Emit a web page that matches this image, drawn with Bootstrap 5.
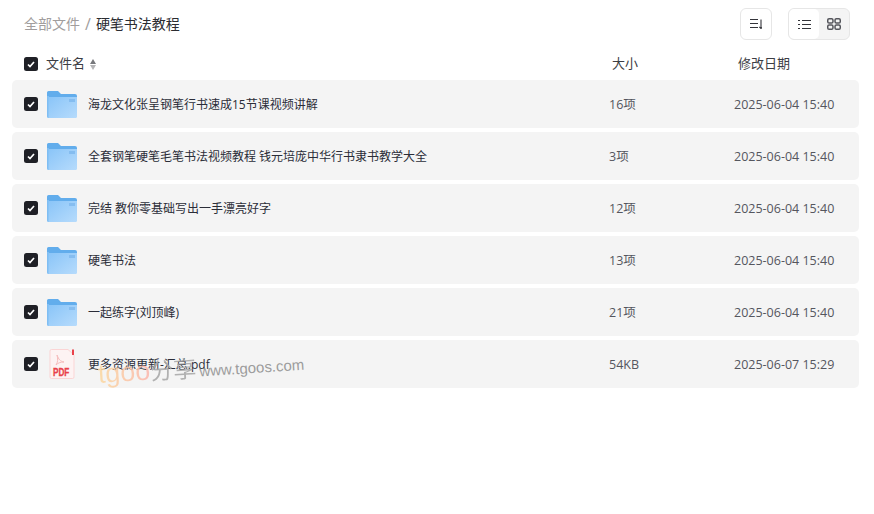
<!DOCTYPE html>
<html lang="zh-CN">
<head>
  <meta charset="UTF-8">
  <meta name="viewport" content="width=device-width, initial-scale=1.0">
  <title>硬笔书法教程</title>
  <link href="https://cdn.jsdelivr.net/npm/bootstrap@5.3.1/dist/css/bootstrap.min.css" rel="stylesheet">
  <style>
    body {
      font-family: "Open Sans", "Noto Sans CJK SC", sans-serif;
      background: #fff;
      color: #25262b;
    }
    .page-wrap { position: relative; padding: 8px 15px 0 12px; }
    .top-bar { height: 32px; padding: 0 9px 0 12px; }
    .crumb-text { display: flex; align-items: center; padding-bottom: 2px; }
    .crumb-link { font-size: 14px; color: #a19d9d; }
    .crumb-sep { font-size: 16px; color: #a19d9d; margin: 2px 5px 0 5px; line-height: 1; }
    .crumb-now { font-size: 14px; color: #2b2c31; }
    .tool-btn {
      width: 32px; height: 32px; border: 1px solid #e6e6e6; border-radius: 6px; background: #fff;
    }
    .view-group {
      width: 62px; height: 32px; border: 1px solid #e6e6e6; border-radius: 6px; background: #f4f4f4; overflow: hidden; margin-left: 16px;
    }
    .view-item { width: 30px; height: 30px; }
    .view-item.on { background: #fff; border-radius: 5px; }
    .head-row { height: 40px; padding: 8px 0 0 12px; font-size: 13px; color: #3c3d44; }
    .tick {
      width: 14px; height: 14px; border-radius: 2.5px; background: #1f2026; flex: none;
    }
    .col-name { flex: 1; min-width: 0; }
    .sort-caret { margin-left: 5px; }
    .head-size { width: 126px; }
    .head-date { width: 121px; }
    .file-row {
      height: 48px; margin-bottom: 4px; padding-left: 12px; background: #f4f4f4; border-radius: 5px; font-size: 12px;
    }
    .file-row .col-name, .cell-size, .cell-date { padding-top: 2px; }
    .file-ico { width: 38px; margin-left: 5px; flex: none; }
    .file-name { margin-left: 7px; color: #2b2d38; }
    .cell-size { width: 125px; color: #55565e; font-size: 12.5px; }
    .cell-date { width: 125px; color: #55565e; font-size: 12.5px; }
    .stamp {
      position: absolute; left: 99px; top: 358px; white-space: nowrap; transform: rotate(-3.7deg); transform-origin: left bottom; pointer-events: none; font-family: "Liberation Sans", "Noto Sans CJK SC", sans-serif;
    }
    .stamp-logo {
      font-size: 27px; line-height: 1; background: linear-gradient(90deg, #fbd9a0, #fcc1a8 70%, #fcb5ad); -webkit-background-clip: text; background-clip: text; color: transparent; opacity: .85;
    }
    .stamp-cn { font-size: 23px; color: #a6a6a6; opacity: .85; }
    .stamp-url { font-size: 15px; color: #9c9c9c; margin-left: 3px; }
  </style>
</head>
<body>
  <div class="page-wrap">
    <!-- 顶部 -->
    <div class="top-bar d-flex align-items-center">
      <div class="crumb-text">
        <span class="crumb-link">全部文件</span>
        <span class="crumb-sep">/</span>
        <span class="crumb-now">硬笔书法教程</span>
      </div>
      <div class="ms-auto d-flex">
        <div class="tool-btn d-flex align-items-center justify-content-center">
          <svg width="12" height="10" viewBox="0 0 12 10" fill="none" stroke="#33343a" stroke-width="1.100"><path d="M0 .5h8M0 4.500h8M0 8.500h8"/><path d="M11 .5v9M9.300 7.800l1.700 1.700 1-1"/></svg>
        </div>
        <div class="view-group d-flex">
          <div class="view-item on d-flex align-items-center justify-content-center">
            <svg width="13" height="9" viewBox="0 0 13 9" fill="none" stroke="#33343a" stroke-width="1"><path d="M0 .5h2M4 .5h9M0 4.500h2M4 4.500h9M0 8.500h2M4 8.500h9"/></svg>
          </div>
          <div class="view-item d-flex align-items-center justify-content-center">
            <svg width="14" height="12" viewBox="0 0 14 12" fill="none" stroke="#55565c" stroke-width="1.500"><rect x="0.750" y="0.750" width="5.200" height="4.200" rx="1.300"/><rect x="8.050" y="0.750" width="5.200" height="4.200" rx="1.300"/><rect x="0.750" y="7.050" width="5.200" height="4.200" rx="1.300"/><rect x="8.050" y="7.050" width="5.200" height="4.200" rx="1.300"/></svg>
          </div>
        </div>
      </div>
    </div>

    <!-- 表头 -->
    <div class="head-row d-flex align-items-center">
      <span class="tick d-flex align-items-center justify-content-center"><svg width="8" height="7" viewBox="0 0 8 7" fill="none" stroke="#fff" stroke-width="1.700"><path d="M1 3.500l2 2 4-4.500"/></svg></span>
      <div class="col-name d-flex align-items-center ms-2">
        <span>文件名</span>
        <svg class="sort-caret" width="6" height="11" viewBox="0 0 6 11"><path d="M3 0L6 5H0z" fill="#77787c"/><path d="M3 11L0 6h6z" fill="#b4b4b6"/></svg>
      </div>
      <span class="head-size">大小</span>
      <span class="head-date">修改日期</span>
    </div>

    <!-- 列表 -->
    <div id="fileList"></div>

    <!-- 水印 -->
    <div class="stamp"><span class="stamp-logo">tgoo</span><span class="stamp-cn">分享</span><span class="stamp-url">www.tgoos.com</span></div>
  </div>

  <script src="https://cdn.jsdelivr.net/npm/bootstrap@5.3.1/dist/js/bootstrap.bundle.min.js"></script>
  <script>
    const files = [
      { name: "海龙文化张呈钢笔行书速成15节课视频讲解", size: "16项", date: "2025-06-04 15:40", type: "dir" },
      { name: "全套钢笔硬笔毛笔书法视频教程 钱元培庞中华行书隶书教学大全", size: "3项", date: "2025-06-04 15:40", type: "dir" },
      { name: "完结 教你零基础写出一手漂亮好字", size: "12项", date: "2025-06-04 15:40", type: "dir" },
      { name: "硬笔书法", size: "13项", date: "2025-06-04 15:40", type: "dir" },
      { name: "一起练字(刘顶峰)", size: "21项", date: "2025-06-04 15:40", type: "dir" },
      { name: "更多资源更新-汇总.pdf", size: "54KB", date: "2025-06-07 15:29", type: "pdf" },
    ];

    const tick = `<span class="tick d-flex align-items-center justify-content-center"><svg width="8" height="7" viewBox="0 0 8 7" fill="none" stroke="#fff" stroke-width="1.700"><path d="M1 3.500l2 2 4-4.500"/></svg></span>`;

    const dirIcon = `<svg width="30" height="27" viewBox="0 0 30 27" class="d-block">
      <defs><linearGradient id="dirFill" x1="0" y1="0" x2="1" y2="1"><stop offset="0" stop-color="#8ac5f8"/><stop offset="1" stop-color="#b6dbfc"/></linearGradient></defs>
      <path d="M0 1.500Q0 0 1.500 0H11l3 3h14q2 0 2 2v3H0z" fill="#62adec"/>
      <path d="M0 5h2v21.500h27V27H1.500Q0 27 0 25.500z" fill="#7fbef3"/>
      <path d="M1.500 6H30v19.500q0 1.500-1.500 1.500h-27z" fill="url(#dirFill)"/>
      <rect x="22" y="8" width="6" height="3" fill="#85bdf0"/>
    </svg>`;

    const pdfIcon = `<svg width="26" height="30" viewBox="0 0 26 30" class="d-block" overflow="visible">
      <path d="M1 2q0-1.500 1.500-1.500H19L25 6v22q0 1.500-1.500 1.500h-21Q1 29.500 1 28z" fill="#fdf3f3" stroke="#fbd5d5"/>
      <rect x="23" y="0.500" width="2" height="5.500" fill="#e9414a"/>
      <path d="M8 6c2 5 3 6 7 7-4 0-6 1-8 3 2-3 2-6 1-10z" fill="none" stroke="#f6bcbc"/>
      <text transform="translate(4 26.500) scale(.82 1)" font-family="Liberation Sans" font-weight="700" font-size="10" letter-spacing="0" fill="#e9414a" stroke="#e9414a" stroke-width=".3">PDF</text>
    </svg>`;

    document.getElementById("fileList").innerHTML = files.map((f) => `
      <div class="file-row d-flex align-items-center">
        ${tick}
        <div class="file-ico d-flex justify-content-center">${f.type === "dir" ? dirIcon : pdfIcon}</div>
        <div class="col-name"><span class="file-name">${f.name}</span></div>
        <span class="cell-size">${f.size}</span>
        <span class="cell-date">${f.date}</span>
      </div>`).join("");
  </script>
</body>
</html>
